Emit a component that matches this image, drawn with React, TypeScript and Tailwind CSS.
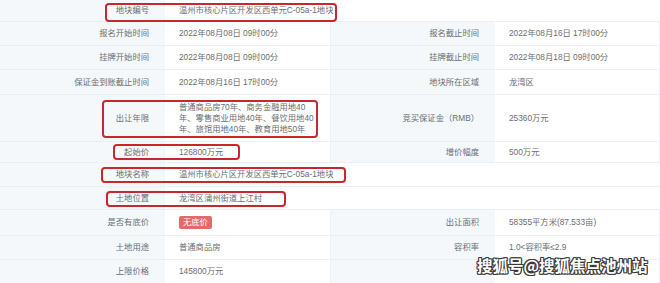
import React from "react";

const font = { fontFamily: '"Liberation Sans", "Noto Sans CJK SC", sans-serif' };

const L = "bg-[#f4f8fb] flex items-center justify-end pr-[16px] text-right whitespace-nowrap";
const V = "bg-white flex items-center pl-[14px] whitespace-nowrap border-r border-[#eef1f5]";

function Row({
  h,
  cells,
}: {
  h: string;
  cells: React.ReactNode;
}) {
  return (
    <div className={`grid grid-cols-[165px_166px_164px_165px] border-b border-[#ebeef3] ${h}`}>
      {cells}
    </div>
  );
}

function Box({ c }: { c: string }) {
  return <div className={`absolute border-2 border-[#c8282d] rounded-[4px] ${c}`} />;
}

export default function App() {
  return (
    <div className="relative w-[660px] h-[283px] overflow-hidden bg-white text-[8.3px] text-[#6a6d72]" style={font}>
      <Row
        h="h-[22px]"
        cells={
          <>
            <div className={L}>地块编号</div>
            <div className="bg-white flex items-center pl-[14px] whitespace-nowrap col-span-3">温州市核心片区开发区西单元C-05a-1地块</div>
          </>
        }
      />
      <Row
        h="h-[24px]"
        cells={
          <>
            <div className={L}>报名开始时间</div>
            <div className={V}>2022年08月08日 09时00分</div>
            <div className={L}>报名截止时间</div>
            <div className={V}>2022年08月16日 17时00分</div>
          </>
        }
      />
      <Row
        h="h-[24px]"
        cells={
          <>
            <div className={L}>挂牌开始时间</div>
            <div className={V}>2022年08月08日 09时00分</div>
            <div className={L}>挂牌截止时间</div>
            <div className={V}>2022年08月18日 09时00分</div>
          </>
        }
      />
      <Row
        h="h-[25px]"
        cells={
          <>
            <div className={L}>保证金到账截止时间</div>
            <div className={V}>2022年08月16日 17时00分</div>
            <div className={L}>地块所在区域</div>
            <div className={V}>龙湾区</div>
          </>
        }
      />
      <Row
        h="h-[47px]"
        cells={
          <>
            <div className={L}>出让年限</div>
            <div className={V}>
              <div className="leading-[11px]">
                <div>普通商品房70年、商务金融用地40</div>
                <div>年、零售商业用地40年、餐饮用地40</div>
                <div>年、旅馆用地40年、教育用地50年</div>
              </div>
            </div>
            <div className={L}>竞买保证金（RMB）</div>
            <div className={V}>25360万元</div>
          </>
        }
      />
      <Row
        h="h-[21px]"
        cells={
          <>
            <div className={L}>起始价</div>
            <div className={V}>126800万元</div>
            <div className={L}>增价幅度</div>
            <div className={V}>500万元</div>
          </>
        }
      />
      <Row
        h="h-[24px]"
        cells={
          <>
            <div className={L}>地块名称</div>
            <div className="bg-white flex items-center pl-[14px] whitespace-nowrap col-span-3">温州市核心片区开发区西单元C-05a-1地块</div>
          </>
        }
      />
      <Row
        h="h-[23px]"
        cells={
          <>
            <div className={L}>土地位置</div>
            <div className="bg-white flex items-center pl-[14px] whitespace-nowrap col-span-3">龙湾区蒲州街道上江村</div>
          </>
        }
      />
      <Row
        h="h-[26px]"
        cells={
          <>
            <div className={L}>是否有底价</div>
            <div className={V}>
              <span className="bg-[#e46a6a] text-white rounded-[2px] px-[4px] h-[13px] flex items-center">无底价</span>
            </div>
            <div className={L}>出让面积</div>
            <div className={V}>58355平方米(87.533亩)</div>
          </>
        }
      />
      <Row
        h="h-[24px]"
        cells={
          <>
            <div className={L}>土地用途</div>
            <div className={V}>普通商品房</div>
            <div className={L}>容积率</div>
            <div className={V}>1.0&lt;容积率≤2.9</div>
          </>
        }
      />
      <Row
        h="h-[24px]"
        cells={
          <>
            <div className={L}>上限价格</div>
            <div className={V}>145800万元</div>
            <div className={L}></div>
            <div className={V}></div>
          </>
        }
      />

      <Box c="left-[105px] top-[3px] w-[232px] h-[19px]" />
      <Box c="left-[102px] top-[100px] w-[216px] h-[38px]" />
      <Box c="left-[113px] top-[144px] w-[127px] h-[16px]" />
      <Box c="left-[101px] top-[167px] w-[245px] h-[16px]" />
      <Box c="left-[106px] top-[191px] w-[180px] h-[16px]" />

      <div
        className="absolute left-[477px] top-[254px] text-[15.5px] font-semibold text-white whitespace-nowrap [text-shadow:1px_1px_0_#3a3a3a,-1px_-1px_0_#3a3a3a,1px_-1px_0_#3a3a3a,-1px_1px_0_#3a3a3a,0_1px_0_#3a3a3a,0_-1px_0_#3a3a3a,1px_0_0_#3a3a3a,-1px_0_0_#3a3a3a]"
        style={{ fontFamily: '"Noto Sans CJK SC", sans-serif' }}
      >
        搜狐号@搜狐焦点池州站
      </div>
    </div>
  );
}
